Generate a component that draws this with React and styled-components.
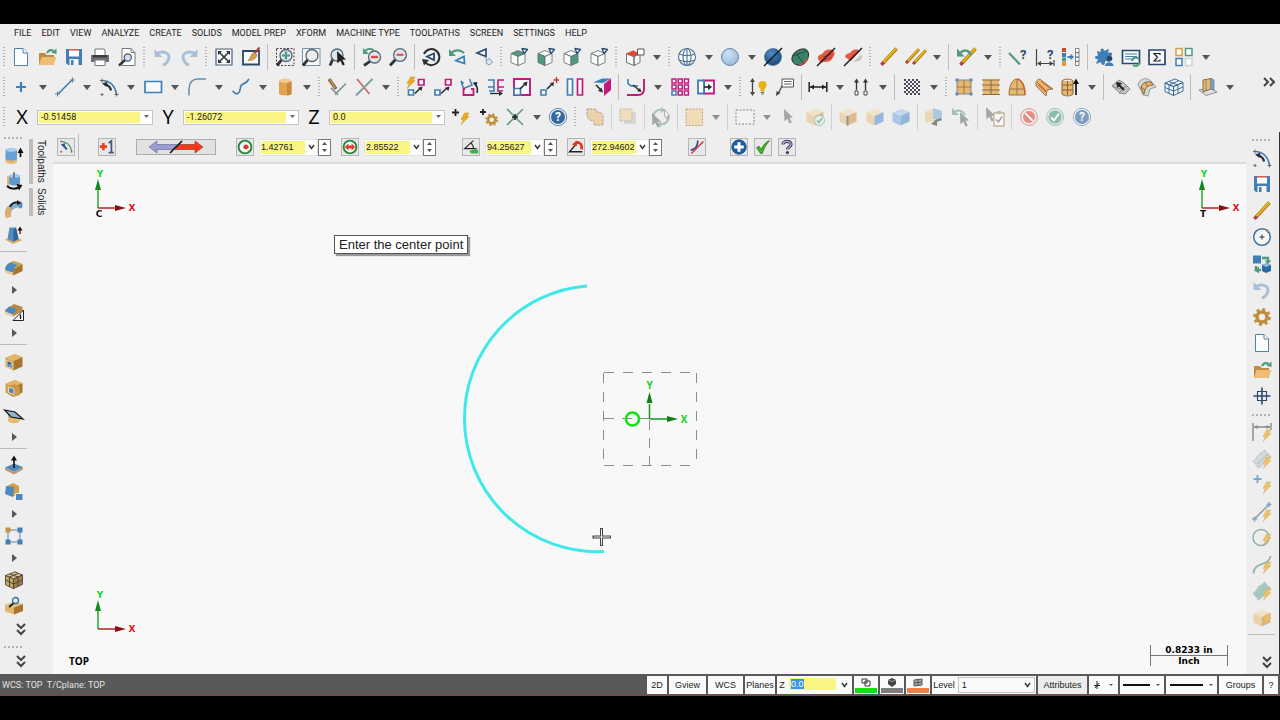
import { Fragment, useEffect, useRef } from "react";
import styled, { createGlobalStyle, css } from "styled-components";

const BLUE = "#3f7fb5";
const NAVY = "#27496f";
const TAN = "#e8b870";
const GREEN = "#4f9a80";
const PINK = "#c2197d";
const DARK = "#2b2f33";

function Bolt({ x = 0, y = 0, fill = "#f0a81c" }) {
  return (
    <path
      transform={`translate(${x} ${y})`}
      d="M4.5 0 9 0 6.6 3.6 9 3.6 1.2 11.5 3.4 6.4 1 6.4Z"
      fill={fill}
      stroke="#b8860b"
      strokeWidth="0.4"
    />
  );
}

function Cube({ top = "#f3dcb0", left = "#e8c285", right = "#cf9c50", line = "none" }) {
  return (
    <g stroke={line} strokeWidth="0.9" strokeLinejoin="round">
      <path d="M1.5 5.5 11 1.8 18.5 5 9.5 9Z" fill={top} />
      <path d="M1.5 5.5 9.5 9V18.6L1.5 14.8Z" fill={left} />
      <path d="M9.5 9 18.5 5V14.4L9.5 18.6Z" fill={right} />
    </g>
  );
}

function ViewCube({ top = "#f8f8f8", left = "#f8f8f8", right = "#f8f8f8" }) {
  return (
    <g stroke="#5b6b6b" strokeWidth="0.8" fill="none" strokeLinejoin="round">
      <path d="M2 6.5 9 3.5 16 6.5 9 9.5Z" fill={top} />
      <path d="M2 6.5 9 9.5V18.5L2 15.5Z" fill={left} />
      <path d="M9 9.5 16 6.5V15.5L9 18.5Z" fill={right} />
      <path d="M13 1.5 18.5 2.5 15 6.5Z" fill="#f8f8f8" stroke={NAVY} strokeWidth="1.3" />
    </g>
  );
}

function Lens({ x = 12, y = 8, r = 6, fill = "#dbe7f0" }) {
  return (
    <g>
      <path d={`M${x - r * 0.7} ${y + r * 0.7} 2 18.5`} stroke="#333" strokeWidth="2.8" />
      <circle cx={x} cy={y} r={r} fill={fill} stroke="#5d646b" strokeWidth="1.3" />
    </g>
  );
}

function Pencil({ shift = 0 }) {
  return (
    <g transform={`translate(${shift} 0)`}>
      <path d="M17.5 1.5 4 16" stroke="#a87a14" strokeWidth="3.6" />
      <path d="M17.2 1.5 4 15.6" stroke="#e8b51c" strokeWidth="2" />
      <path d="M4.7 15.3 2.4 17.8" stroke="#b03a3a" strokeWidth="3.4" />
    </g>
  );
}

function Sheet({ w = 13 }) {
  return (
    <g stroke="#4f81ad" fill="#fcfdfe">
      <path d={`M3.5 1.5H${w - 1}L${w + 3.5} 6V18.5H3.5Z`} />
      <path d={`M${w - 1} 1.5V6H${w + 3.5}`} />
    </g>
  );
}

const Cursor = ({ x = 0, y = 0, fill = "#222" }) => (
  <path
    transform={`translate(${x} ${y})`}
    d="M0 0 9 8.5 5.4 8.8 7.8 13.4 5.6 14.4 3.4 9.8 0.4 12.2Z"
    fill={fill}
  />
);

const openFolder = (
  <>
    <path d="M2 6H8L9.5 8H17V18H2Z" fill="#c08a45" />
    <path d="M4.5 10H19.5L16.5 18H2Z" fill="#efbd76" />
    <path d="M10 6C12 2.5 14.5 2.6 16.5 4.2" stroke={GREEN} strokeWidth="2.2" fill="none" />
    <path d="M14.5 5.8 19.5 7V1.5Z" fill={GREEN} />
  </>
);

const floppy = (
  <>
    <path d="M2 2H18V18H4L2 16Z" fill={BLUE} />
    <path d="M5 3H15V9.5H5Z" fill="#fff" />
    <path d="M5 2H15V3.6H5Z" fill="#d9604e" />
    <path d="M5.5 12H14.5V18H5.5Z" fill="#f5f5f5" />
    <path d="M7 13H9.5V18H7Z" fill={BLUE} />
  </>
);

const undo = (
  <>
    <path d="M4 6.5C10 3.5 17 5.5 15.8 11 15.2 14.5 12.8 17 10 18.2" stroke="#a9c1d8" strokeWidth="3" fill="none" />
    <path d="M1.5 2V10H9.5Z" fill="#a9c1d8" />
  </>
);

const arcTool = (
  <>
    <path d="M4 3.5C11 4 16 9 17.5 17" stroke={BLUE} strokeWidth="1.6" fill="none" />
    <path d="M12 13.5C11.5 10.5 9.5 8.5 7 7.5" stroke={DARK} strokeWidth="2.2" fill="none" />
    <path d="M3 6.5 8.5 4.8 7.5 10Z" fill={DARK} />
    <path d="M3 1.5V5.5M1 3.5H5M17.5 15.5V19.5M15.5 17.5H19.5M3 16V19M1.5 17.5H4.5" stroke="#666" />
  </>
);

const cylinder = (
  <>
    <path d="M4 4V16.5C4 19 16.5 19 16.5 16.5V4Z" fill="#dfa352" />
    <path d="M12 4H16.5V16.5C16.5 17.6 14.4 18.2 12 18.4Z" fill="#c88a3b" />
    <ellipse cx="10.2" cy="3.8" rx="6.2" ry="2.2" fill="#f1c98f" />
  </>
);

const gear = (fill = "#bf8d3d") => (
  <g fill="none" stroke={fill}>
    <circle cx="10" cy="10" r="5" strokeWidth="3.6" />
    <circle cx="10" cy="10" r="7.6" strokeWidth="2.6" strokeDasharray="3 2.97" />
  </g>
);

const sphere = (id, light, deep) => (
  <>
    <radialGradient id={id} cx="0.4" cy="0.3" r="0.8">
      <stop offset="0" stopColor={light} />
      <stop offset="1" stopColor={deep} />
    </radialGradient>
    <circle cx="10" cy="10" r="8.5" fill={`url(#${id})`} stroke="#4d7195" strokeWidth="0.8" />
  </>
);

const slash = <path d="M1 19 19 1" stroke="#1b1b1b" strokeWidth="1.5" />;

const surface = (fill) => (
  <>
    <path d="M1 12C5 11 5 5 9 4L13 1C14 5 18 5 19 8 14 9 13 16 6 19 5 15 2 15 1 12Z" fill={fill} stroke="#95a9b0" strokeWidth="0.8" />
    <path d="M5 15C10 13 10 8 16 6" stroke="#87a19c" fill="none" />
  </>
);

const minus = <path d="M8.5 7.8H15.5" stroke="#df4a3d" strokeWidth="2" />;

const backArrow = (
  <>
    <path d="M4 6C8 2 13 3 15 8" stroke={GREEN} strokeWidth="2.4" fill="none" />
    <path d="M1 1.5V9.5H8.5Z" fill={GREEN} />
  </>
);

const box3d = <Cube top="#e2b66a" left="#d6a04c" right="#a8752c" />;

const icons = {
  newFile: <Sheet />,
  open: openFolder,
  save: floppy,
  print: (
    <>
      <path d="M5 2H14L15 3V9H5Z" fill="#fff" stroke="#777" />
      <path d="M1 8H19V15H1Z" fill="#6d7176" />
      <path d="M3 8H17V10.5H3Z" fill="#3a3d41" />
      <path d="M5 13H15V18.5H5Z" fill="#fff" stroke="#777" />
    </>
  ),
  preview: (
    <>
      <path d="M5 1.5H14L18 5.5V18.5H5Z" fill="#fff" stroke="#777" />
      <path d="M14 1.5V5.5H18" fill="none" stroke="#777" />
      <path d="M8 13 2 18.5" stroke="#333" strokeWidth="2.4" />
      <circle cx="10.8" cy="10.5" r="3.6" fill="#cfe0ee" stroke="#456" strokeWidth="1.2" />
    </>
  ),
  undo,
  redo: <g transform="matrix(-1 0 0 1 20 0)">{undo}</g>,
  fit: (
    <>
      <path d="M2 2H18V18H2Z" fill="#f8f8f8" stroke="#49627c" strokeWidth="1.2" />
      <path d="M5.5 5.5 14.5 14.5M14.5 5.5 5.5 14.5" stroke={DARK} strokeWidth="1.5" />
      <path d="M4 4H8L4 8ZM16 4H12L16 8ZM4 16H8L4 12ZM16 16H12L16 12Z" fill={DARK} />
    </>
  ),
  repaint: (
    <>
      <path d="M2 4H18V17.5H2Z" fill="#fafafa" stroke={NAVY} strokeWidth="1.8" />
      <path d="M18.5 0.5 14 6" stroke="#b03a2e" strokeWidth="2" />
      <path d="M13 5 16 8C14.5 12.5 12 13.5 7 13.5 10 11 10 7 13 5Z" fill="#d5a052" stroke="#94682a" strokeWidth="0.6" />
    </>
  ),
  zoomWindow: (
    <>
      <path d="M1.5 1.5H19V18.5H1.5Z" fill="none" stroke="#444" strokeDasharray="2 1.5" />
      <Lens x={11} y={8.5} />
      <path d="M11 4.5V12.5M7 8.5H15" stroke={GREEN} strokeWidth="2.2" />
    </>
  ),
  zoomTarget: (
    <>
      <path d="M1.5 1.5H19V18.5H1.5Z" fill="#f5f7f9" stroke="#7891a8" />
      <Lens x={11} y={8.5} fill="#e9eff3" />
    </>
  ),
  zoomSelect: (
    <>
      <Lens x={9} y={8} />
      <Cursor x={9} y={4} />
    </>
  ),
  unzoomPrevious: (
    <>
      <Lens x={12.5} y={10} r={6} />
      <path d="M9 10H16" stroke="#df4a3d" strokeWidth="2.4" />
      <path d="M3 4C6 1 10 1 12 4" stroke={GREEN} strokeWidth="2" fill="none" />
      <path d="M1 1V7H7Z" fill={GREEN} />
    </>
  ),
  unzoom: (
    <>
      <Lens r={6.4} />
      {minus}
    </>
  ),
  rotateView: (
    <>
      <path d="M3 7A8 8 0 1 1 4 15" fill="none" stroke={DARK} strokeWidth="2" />
      <path d="M1 12 8 13 3 18.5Z" fill={DARK} />
      <path d="M6 9.5 13 6.5V13Z" fill="#f5f7fa" stroke={NAVY} strokeWidth="1.8" />
    </>
  ),
  previousView: (
    <>
      <path d="M3.5 5.5C8 2 13 3 16 6" stroke={GREEN} strokeWidth="2.2" fill="none" />
      <path d="M1 2V9H8Z" fill={GREEN} />
      <path d="M8 13.5 16 9.5 16.5 16.5Z" fill="#f5f7fa" stroke={BLUE} strokeWidth="1.8" />
    </>
  ),
  namedView: (
    <>
      <path d="M3 6 12 2V9.5Z" fill="#f5f7fa" stroke={NAVY} strokeWidth="1.7" />
      <path d="M10 9 13 14" stroke="#9aa" />
      <path d="M12 13.5 15.5 11.5 18.5 15 15.5 18 12.5 16.5Z" fill="#dbe7f2" stroke="#7899b8" />
    </>
  ),
  topView: <ViewCube top={GREEN} />,
  frontView: <ViewCube left={GREEN} />,
  rightView: <ViewCube right={GREEN} />,
  isoView: <ViewCube />,
  planeView: (
    <>
      <g stroke="#5b6b6b" strokeWidth="0.9" fill="#f8f8f8">
        <path d="M1.5 7 9 9.5V18.5L1.5 15.5ZM9 9.5 15 7V15.5L9 18.5Z" />
      </g>
      <path d="M1 6.5 8 3.5 15 6.5 9 10Z" fill="#dd4a33" />
      <path d="M12.5 2H19V8H12.5Z" fill="#fff" stroke="#555" />
    </>
  ),
  wireframe: (
    <g fill="#fafcfd" stroke="#4f7196" strokeWidth="1.1">
      <circle cx="10" cy="10" r="8.5" />
      <ellipse cx="10" cy="10" rx="4" ry="8.5" fill="none" />
      <path d="M10 1.5V18.5M2 7C7 9 13 9 18 7M2 13C7 15 13 15 18 13" fill="none" />
    </g>
  ),
  shaded: sphere("shadeLight", "#cfe2f5", "#93b5d8"),
  shadedHalf: (
    <>
      {sphere("shadeDeep", "#4f8dc4", "#14406f")}
      {slash}
    </>
  ),
  material: (
    <>
      <path d="M2 13C1 7 8 1 15 2 21 4 19 15 12 18 7 19 3 17 2 13Z" fill="#3c8268" stroke="#222" />
      <path d="M8 18C13 16 17 13 18.5 9 18 15 14 18.5 8 18Z" fill="#d8533b" />
      <path d="M5 5 14 17M2.5 9C9 7 13 5 17 4" stroke="#1d4f3d" fill="none" />
    </>
  ),
  materialOff: (
    <>
      <path d="M2 12C1 8 5 8 7 6 9 2 14 2 17 3 20 6 18 9 16 12 14 16 8 14 5 16Z" fill="#e35a40" />
      <path d="M7 10 17 7M8 13 16 10" stroke="#b6362a" fill="none" />
      {slash}
    </>
  ),
  translucent: (
    <>
      <path d="M2 10C3 6 6 7 8 5 10 2 14 2 17 4L8 14Z" fill="#e35a40" />
      <path d="M10 15 18 7.5 19.5 10 17 14Z" fill="#c3c7c9" />
      {slash}
    </>
  ),
  pencil: <Pencil />,
  pencils: (
    <>
      <g transform="translate(-1 1) scale(0.85)"><Pencil /></g>
      <g transform="translate(6 2) scale(0.85)"><Pencil /></g>
    </>
  ),
  undoPencil: (
    <>
      <Pencil shift={2} />
      {backArrow}
    </>
  ),
  analyzeEntity: (
    <>
      <path d="M1 6 12 17.5" stroke={GREEN} strokeWidth="2.2" />
      <text x="12" y="12" fontSize="13" fontWeight="700" fill={NAVY}>?</text>
    </>
  ),
  analyzeDistance: (
    <>
      <path d="M1.5 2V19M19 13V19M3 16.5H18" stroke="#444" strokeWidth="1.2" />
      <path d="M2 16.5 6 14V19ZM18.5 16.5 14.5 14V19Z" fill="#444" />
      <text x="12" y="12" fontSize="13" fontWeight="700" fill={NAVY}>?</text>
    </>
  ),
  changeRecognition: (
    <>
      <path d="M1 1H5V5H1Z" fill="#c4502d" />
      <path d="M1 6H5V10H1Z" fill="#377eb8" />
      <path d="M1 10.5H5V14.5H1Z" fill={GREEN} />
      <path d="M1 15H5V19H1Z" fill="#e69430" />
      <path d="M6.5 10H10.5" stroke={BLUE} strokeWidth="2" />
      <path d="M9.5 6.8 13 10 9.5 13.2Z" fill={BLUE} />
      <path d="M14.5 1.5H18V5.5H14.5ZM14.5 5.8H18V10H14.5ZM14.5 10.2H18V14.2H14.5ZM14.5 14.5H18V18.5H14.5Z" fill="#fff" stroke="#666" strokeWidth="0.8" />
    </>
  ),
  puzzle: (
    <>
      <path d="M3 4 7 5C5 1 10 0 10 4L15 2 14 6C19 4 20 9 15 9.5L16 15 11 14C12 19 7 19 7 15L2 17 4 12C0 13 0 8 4 9Z" fill={BLUE} />
      <circle cx="15.5" cy="11.5" r="2.8" fill={NAVY} />
      <path d="M11 19C11 14 19.5 14 19.5 19Z" fill={BLUE} />
    </>
  ),
  runAddin: (
    <>
      <path d="M1.5 3.5H18.5V16.5H1.5Z" fill="#fafafa" stroke={NAVY} strokeWidth="1.7" />
      <path d="M4 7H16M4 9.5H16M4 12H11" stroke={BLUE} strokeWidth="1.2" />
      <path d="M11 14A4 4 0 0 1 18 12M18.5 15A4 4 0 0 1 12 18" stroke={GREEN} strokeWidth="2" fill="none" />
    </>
  ),
  sigma: (
    <>
      <path d="M2 3H18V17.5H2Z" fill="#fafafa" stroke={NAVY} strokeWidth="1.7" />
      <path d="M13 8V6.5H7L10.5 10.3 7 14H13V12.5" fill="none" stroke="#222" strokeWidth="1.2" />
    </>
  ),
  windows: (
    <g fill="#fff" strokeWidth="1.5">
      <path d="M2 1.5H8V8.5H2Z" stroke="#e09a3e" />
      <path d="M11.5 1.5H18V8.5H11.5Z" stroke={GREEN} />
      <path d="M2 11.5H8V18.5H2Z" stroke={BLUE} />
      <path d="M11.5 11.5H18V18.5H11.5Z" stroke="#c8d6d0" />
    </g>
  ),
  point: <path d="M10 5V15M5 10H15" stroke={BLUE} strokeWidth="2.2" />,
  line: (
    <>
      <path d="M3 17 17 3" stroke={BLUE} strokeWidth="1.6" />
      <path d="M17.5 .5V5.5M15 3H20M2.5 14.5V19.5M0 17H5" stroke="#6a7f92" />
    </>
  ),
  arc: arcTool,
  rect: <path d="M2 4.5H18.5V15.5H2Z" fill="#f6f8fa" stroke={BLUE} strokeWidth="1.7" />,
  fillet: <path d="M2 18.5V12Q2.5 2 11 2H19" fill="none" stroke="#5b91b0" strokeWidth="1.5" />,
  spline: <path d="M1.5 14C7 20 9 15 9.5 10.5 10 5 14 9 18 2" fill="none" stroke={BLUE} strokeWidth="1.7" />,
  cylinder,
  trim: (
    <>
      <path d="M8 17.5 19 6.5M4 11 11 18" stroke="#789690" strokeWidth="1.7" />
      <path d="M2 2 9 12" stroke="#8b6b45" strokeWidth="3.4" />
      <path d="M3 2.5 8 11" stroke="#c99c55" strokeWidth="1.2" />
    </>
  ),
  breakAt: (
    <>
      <path d="M3 2 15.5 17" stroke="#d4605a" strokeWidth="1.7" />
      <path d="M18.5 2 2 18.5" stroke="#77a19b" strokeWidth="1.8" />
    </>
  ),
  dynamicXform: (
    <>
      <path d="M12.5 2.5H18V8H12.5Z" fill="#fff" stroke={PINK} strokeWidth="1.7" />
      <path d="M2.5 13H7.5V18H2.5Z" fill="#fff" stroke={BLUE} strokeWidth="1.7" />
      <path d="M9 16.5 14.5 11" stroke={DARK} strokeWidth="1.6" />
      <path d="M16.5 9.5 15.5 14 12 10.8Z" fill={DARK} />
      <Bolt x={0} y={0} />
    </>
  ),
  translate: (
    <>
      <path d="M12.5 2.5H18V8H12.5Z" fill="#fff" stroke={PINK} strokeWidth="1.7" />
      <path d="M2 13H7V18H2Z" fill="#fff" stroke={BLUE} strokeWidth="1.7" />
      <path d="M8 16.5 14 11" stroke={DARK} strokeWidth="1.6" />
      <path d="M16.5 9.5 15.5 14 12 10.8Z" fill={DARK} />
    </>
  ),
  rotate: (
    <>
      <path d="M2 4 4.5 11.5 13 8 10.5 2M4.5 6.5 2 4" fill="none" stroke={BLUE} strokeWidth="1.5" />
      <path d="M6 12H4.5V18H14.5V12H12" fill="none" stroke={PINK} strokeWidth="1.8" />
      <path d="M18 16C19 12 18 9 16 7" fill="none" stroke={DARK} strokeWidth="1.6" />
      <path d="M13.5 5.5 18.5 5 17 9.8Z" fill={DARK} />
    </>
  ),
  mirror: (
    <>
      <path d="M2 3H8V10H2M8 3V14H3" fill="none" stroke={BLUE} strokeWidth="1.6" />
      <path d="M18 3H12V10H18M12 3V14H17" fill="none" stroke={PINK} strokeWidth="1.6" />
      <path d="M4 16.5H14" stroke={DARK} strokeWidth="1.4" />
      <path d="M17 16.5 13 14V19Z" fill={DARK} />
    </>
  ),
  scale: (
    <>
      <path d="M2 2H18V18H2Z" fill="#fafafa" stroke={PINK} strokeWidth="1.9" />
      <path d="M2 11.5H8.5V18H2Z" fill="#fff" stroke={BLUE} strokeWidth="1.7" />
      <path d="M8 12 13 7" stroke={DARK} strokeWidth="1.7" />
      <path d="M15.5 4.5 14.5 9.5 10.8 6Z" fill={DARK} />
    </>
  ),
  moveOrigin: (
    <>
      <path d="M2 13H7V18H2Z" fill="#fff" stroke={BLUE} strokeWidth="1.6" />
      <path d="M8 12 13 7" stroke={DARK} strokeWidth="1.7" />
      <path d="M15 5 14.3 9.5 11 6.2Z" fill={DARK} />
      <path d="M17.5 0V6M14.5 3H20" stroke="#d22c33" strokeWidth="1.4" />
    </>
  ),
  offset: (
    <g fill="#fafafa" strokeWidth="1.7">
      <path d="M2.5 2H7.5V18H2.5Z" stroke={BLUE} />
      <path d="M12.5 2H17.5V18H12.5Z" stroke={PINK} />
    </g>
  ),
  project: (
    <>
      <path d="M1 5.5 10 1.5H19L11 6Z" fill={BLUE} />
      <path d="M12 7 19 1.5V13L12 19Z" fill={PINK} />
      <path d="M4 8 9 13" stroke={DARK} strokeWidth="1.7" />
      <path d="M11 15.5 6 14 9.5 10.5Z" fill={DARK} />
    </>
  ),
  offsetContour: (
    <>
      <path d="M2 2V6C3 9 5 9 12 9" fill="none" stroke={BLUE} strokeWidth="1.6" />
      <path d="M18 2V12Q18 18 12 18H1" fill="none" stroke={PINK} strokeWidth="1.9" />
      <path d="M7 8 13 13" stroke={DARK} strokeWidth="1.6" />
      <path d="M15.5 15 11 14.2 14 11Z" fill={DARK} />
    </>
  ),
  rectArray: (
    <g fill="#fff" strokeWidth="1.5">
      <path stroke={PINK} d="M2 2H6V6H2ZM8.2 2H12.2V6H8.2ZM14.4 2H18.4V6H14.4ZM2 8H6V12H2ZM8.2 8H12.2V12H8.2ZM14.4 8H18.4V12H14.4ZM8.2 14H12.2V18H8.2ZM14.4 14H18.4V18H14.4Z" />
      <path stroke={BLUE} d="M2 14H6V18H2Z" />
    </g>
  ),
  stretch: (
    <>
      <path d="M8 3.5H18V16.5H8Z" fill="#fff" stroke={PINK} strokeWidth="1.8" />
      <path d="M2 3.5H8V16.5H2Z" fill="#fff" stroke={BLUE} strokeWidth="1.8" />
      <path d="M8 10H13" stroke={DARK} strokeWidth="1.7" />
      <path d="M16 10 12 6.8V13.2Z" fill={DARK} />
    </>
  ),
  hint: (
    <>
      <path d="M3.5 4V16" stroke="#444" strokeWidth="1.3" />
      <path d="M3.5 1 6 5H1ZM3.5 19 6 15H1Z" fill="#444" />
      <circle cx="13.5" cy="8" r="4" fill="#e7b50e" />
      <path d="M11.5 11H15.5V14.5H11.5Z" fill="#e7b50e" />
      <path d="M11.8 15.5H15.2M12.2 17H14.8" stroke="#666" />
    </>
  ),
  note: (
    <>
      <path d="M7 2H18.5V10H7Z" fill="#fff" stroke="#555" />
      <path d="M9 4.5H16.5M9 7H16.5" stroke="#666" />
      <path d="M7 9 3 17" stroke="#444" strokeWidth="1.3" />
      <path d="M1 19 1.6 14 5.5 16Z" fill="#444" />
    </>
  ),
  dimension: (
    <>
      <path d="M1.2 5V15M18.8 5V15M2 10H18" stroke="#222" strokeWidth="1.5" />
      <path d="M2 10 6 7.5V12.5ZM18 10 14 7.5V12.5Z" fill="#222" />
    </>
  ),
  ordinate: (
    <>
      <path d="M5.5 5V13M14.5 5V13" stroke="#333" strokeWidth="1.3" />
      <path d="M5.5 1.5 8 5.5H3ZM14.5 1.5 17 5.5H12Z" fill="#333" />
      <path d="M4 14H7V18H4ZM13 14H16V18H13Z" fill="#fff" stroke="#444" />
    </>
  ),
  hatch: (
    <>
      <pattern id="checks" width="4" height="4" patternUnits="userSpaceOnUse">
        <path d="M0 0H2V2H0ZM2 2H4V4H2Z" fill="#474d55" />
      </pattern>
      <path d="M2 2H18V18H2Z" fill="url(#checks)" />
    </>
  ),
  planeSurface: (
    <>
      <path d="M3 3H17V17H3Z" fill={TAN} stroke="#7c8794" />
      <path d="M10 3V17M3 10H17" stroke="#9c7a4c" />
      <path d="M1.5 1.5H4.5V4.5H1.5ZM15.5 1.5H18.5V4.5H15.5ZM1.5 15.5H4.5V18.5H1.5ZM15.5 15.5H18.5V18.5H15.5Z" fill="#6389b0" />
    </>
  ),
  ruledSurface: (
    <>
      <path d="M2 2.5H18V17.5H2Z" fill={TAN} />
      <path d="M1 3H19M1 8H19M1 13H19M1 17.5H19M10 3V17" stroke="#806a4b" />
    </>
  ),
  loftSurface: (
    <>
      <path d="M2 18C2 10 5 2 10 2 15 2 18 10 18 18Z" fill={TAN} stroke="#947246" />
      <path d="M2 12H18M10 2V18" stroke="#94744a" />
      <path d="M11 2C16 4 18 10 18 18" stroke="#d05b2c" fill="none" strokeWidth="1.4" />
    </>
  ),
  sweptSurface: (
    <>
      <path d="M2 6C2 2 7 1 8 4L19 12 13 13 12 19 2 9Z" fill={TAN} stroke="#81613a" strokeWidth="0.8" />
      <path d="M4 8 13 16M7 4 17 12M3 5 12 14" stroke="#c4582c" fill="none" />
    </>
  ),
  extrudeSurface: (
    <>
      <path d="M2 4H13V18H2Z" fill={TAN} />
      <path d="M2 4C4 1.5 11 1.5 13 4V17C11 19.5 4 19.5 2 17ZM2 8H13M2 13H13M7.5 4V18" fill="none" stroke="#8a6134" />
      <path d="M16 18V6" stroke="#111" strokeWidth="1.7" />
      <path d="M16 1.5 19 7H13Z" fill="#111" />
    </>
  ),
  trimSurface: (
    <>
      <path d="M1 9 8 3 13 6 19 12 14 17 9 16Z" fill="#c0c5c0" stroke="#848a86" />
      <path d="M2 10 10 12 16 9M8 17 13 10" stroke="#8d948f" fill="none" />
      <path d="M13 13 8 8" stroke="#222" strokeWidth="2" />
      <path d="M5 5 11 6 6.5 11Z" fill="#222" />
    </>
  ),
  filletSurface: (
    <>
      <path d="M1 8C2 1 10 0 14 4L19 10 13 12 11 19 6 18 4 13Z" fill="#d3d7d4" stroke="#989e9a" />
      <path d="M4 12C4 7 8 4 14 5L16 8C10 8 8 11 7 17Z" fill={TAN} stroke="#87673b" />
      <path d="M8 5 11 10M4 10 8 13" stroke="#87673b" />
    </>
  ),
  meshCube: (
    <g fill="#eef4fa" stroke="#31618f" strokeWidth="0.9">
      <path d="M1 6 11 2 19 5.5 9.5 9.5Z M1 6 9.5 9.5V18.5L1 14.5ZM9.5 9.5 19 5.5V14L9.5 18.5Z" />
      <path d="M5 4.5 14 8V16.5M15 3.6 5 8V16.5M1 10.5 9.5 14 19 10" fill="none" />
    </g>
  ),
  solidPlane: (
    <>
      <path d="M1 13 12 11 19 15 8 18.5Z" fill="#dfe2e3" stroke="#858c91" />
      <path d="M5 3 13 1.5V12L5 15Z" fill={TAN} stroke="#8a6a3c" />
      <path d="M13 1.5 16 3V13L13 12ZM8 3V14" fill="#7fa5c6" stroke="#5b7d99" strokeWidth="0.8" />
    </>
  ),
  fastPoint: (
    <>
      <path d="M3.5 2V9M0 5.5H7" stroke="#222" strokeWidth="1.8" />
      <Bolt x={8} y={6} />
    </>
  ),
  pointSettings: (
    <>
      <path d="M4 2V8M1 5H7" stroke="#222" strokeWidth="1.8" />
      <g transform="translate(5.5 5.5) scale(0.72)">{gear()}</g>
    </>
  ),
  autocursor: (
    <>
      <path d="M2 2 18 18M18 2 2 18" stroke="#6b9b8a" strokeWidth="1.7" />
      <path d="M10 7V13M7 10H13" stroke="#222" strokeWidth="1.6" />
    </>
  ),
  help: (
    <>
      <circle cx="10" cy="10" r="8.6" fill="#f5f8fb" stroke="#5d87b5" />
      <circle cx="10" cy="10" r="7" fill="#34689f" />
      <text x="10" y="14.2" fontSize="12" fontWeight="700" fill="#fff" textAnchor="middle">?</text>
    </>
  ),
  selectChain: (
    <path d="M2 2H11V5C16 4 19 8 18 12V18H9V14C4 14 2 11 2 7Z" fill="#eac07e" stroke="#7d6c4d" strokeDasharray="2 1" />
  ),
  selectBehind: (
    <>
      <path d="M6 5H18V17H6Z" fill="#c6c9cb" />
      <path d="M2 2H14V14H2Z" fill="#f0d29c" stroke="#998" strokeDasharray="2 1" />
    </>
  ),
  selectCycle: (
    <>
      <path d="M3 12C1 7 5 2 11 3M17 8C19 13 15 18 9 17" stroke="#7aa89a" strokeWidth="2" fill="none" />
      <path d="M10 0V6L14 3ZM10 14V20L6 17Z" fill="#7aa89a" />
      <Cursor x={1} y={6} fill="#70767c" />
      <path d="M13 2 19 9 16 9 17 13 14 10Z" fill="#fff" stroke="#777" />
    </>
  ),
  selectAll: <path d="M2 2H18.5V18.5H2Z" fill="#f5cf94" stroke="#a07b43" strokeDasharray="2 1.2" />,
  selectWindow: <path d="M1 3H19V17H1Z" fill="#f6f6f6" stroke="#444" strokeDasharray="2 1.5" />,
  pointer: <Cursor x={5} y={2} fill="#6e747a" />,
  solidCheck: (
    <>
      <Cube />
      <circle cx="14.5" cy="13.5" r="5" fill="#e3eeea" stroke="#7aa896" />
      <path d="M12 13.5 14 15.5 17 11" stroke={GREEN} strokeWidth="1.6" fill="none" />
    </>
  ),
  solidEdge: (
    <>
      <Cube />
      <path d="M9.5 9V18.6" stroke="#555" strokeWidth="2" />
    </>
  ),
  solidFace: <Cube right="#5993cf" />,
  solidBody: <Cube top="#a9cbee" left="#7eb0e2" right="#5790cb" />,
  solidBack: (
    <>
      <path d="M1 5 9 2V14L1 16Z" fill="#e9c88e" />
      <path d="M9 1 18 4V14L9 12Z" fill="#7fb0df" />
      <path d="M17 12 10 15" stroke="#444" strokeWidth="2" />
      <path d="M7 17 13 12 13 19Z" fill="#444" />
    </>
  ),
  lastSelect: (
    <>
      <path d="M3 5C8 2 12 4 14 8" stroke="#6aa691" strokeWidth="2" fill="none" />
      <path d="M1 1V8H8Z" fill="#6aa691" />
      <Cursor x={9} y={5} fill="#6e747a" />
    </>
  ),
  validate: (
    <>
      <Cursor x={1} y={0} fill="#70767c" />
      <path d="M9 6H19V19H9Z" fill="#fff" stroke="#b08d50" strokeWidth="1.4" />
      <path d="M12 4H16V7H12Z" fill="#999" />
      <path d="M11 12.5 13.5 15 17 9.5" stroke="#667" strokeWidth="1.4" fill="none" />
    </>
  ),
  clear: (
    <>
      <circle cx="10" cy="10" r="8.4" fill="#f6e6e4" stroke="#d9604e" />
      <circle cx="10" cy="10" r="6" fill="#d9503e" />
      <path d="M6 6 14 14" stroke="#fff" strokeWidth="1.8" />
    </>
  ),
  accept: (
    <>
      <circle cx="10" cy="10" r="8.4" fill="#e7f1ed" stroke="#62a38a" />
      <circle cx="10" cy="10" r="6.6" fill="#52997d" />
      <path d="M6 10.5 9 13.5 14 6.5" stroke="#fff" strokeWidth="2" fill="none" />
    </>
  ),
  arcPanel: (
    <>
      <path d="M4 3C11 3 16 8 17 15" stroke="#38925a" strokeWidth="1.3" fill="none" />
      <path d="M11 13 7 8" stroke="#29558f" strokeWidth="2.4" />
      <path d="M3.5 7 9 5 8 11Z" fill="#29558f" />
      <circle cx="4" cy="3" r="1.2" fill="#d44" />
      <circle cx="17" cy="16" r="1.2" fill="#d44" />
      <circle cx="4" cy="16" r="1.2" fill="#d44" />
    </>
  ),
  plusOne: (
    <>
      <path d="M5.5 5V14M1 9.5H10" stroke="#e8401c" strokeWidth="3.2" />
      <path d="M12 5 15.5 2.5V17M12 17H18.5" stroke="#4a557e" strokeWidth="2.2" fill="none" />
    </>
  ),
  radius: (
    <>
      <circle cx="10" cy="10" r="8" fill="#f8fcf8" stroke="#248a3a" strokeWidth="2.4" />
      <path d="M10 10H15" stroke="#c22" strokeWidth="1.5" />
      <circle cx="11" cy="10" r="3" fill="#d8343a" />
    </>
  ),
  diameter: (
    <>
      <circle cx="10" cy="10" r="8" fill="#f8fcf8" stroke="#248a3a" strokeWidth="2.4" />
      <path d="M3.5 10 8 5.5V8.2H12V5.5L16.5 10 12 14.5V11.8H8V14.5Z" fill="#e0392e" />
    </>
  ),
  startAngle: (
    <>
      <path d="M13 2 2 12H17M9 5C12 6 13 9 13 12" stroke="#222" strokeWidth="1.4" fill="none" />
      <path d="M8 15 13 13H19V18H10Z" fill="#3db24c" />
    </>
  ),
  endAngle: (
    <>
      <path d="M13 3 2 16H18" stroke="#222" strokeWidth="1.8" fill="none" />
      <path d="M9 5C15 3 18 7 17 13" stroke="#e0351e" strokeWidth="3.2" fill="none" />
      <path d="M5 7 11 2 11 9Z" fill="#e0351e" />
    </>
  ),
  tangent: (
    <>
      <path d="M2 14C8 13 11 8 11 2" stroke="#234a9a" strokeWidth="2" fill="none" />
      <path d="M3 18 18 3" stroke="#d33a2c" strokeWidth="1.8" />
    </>
  ),
  apply: (
    <>
      <circle cx="10" cy="10" r="9" fill="#1761a8" stroke="#0f4377" />
      <path d="M10 4V16M4 10H16" stroke="#fff" strokeWidth="3.8" />
    </>
  ),
  ok: <path d="M2 11 5 9 8 13C10 8 13 4 18 2 14 7 11 12 9 18H7Z" fill="#45b528" stroke="#23720f" />,
  question: (
    <>
      <path d="M5 7C5 2 15 1.5 15 7 15 10 10.5 10 10.5 13" stroke="#3d3a63" strokeWidth="4" fill="none" />
      <path d="M5 7C5 2 15 1.5 15 7 15 10 10.5 10 10.5 13" stroke="#b4b2d0" strokeWidth="1.6" fill="none" />
      <circle cx="10.5" cy="17" r="2" fill="#3d3a63" />
    </>
  ),
  extrude: (
    <>
      <path d="M1.5 9H13V16C11 18.5 3.5 18.5 1.5 16Z" fill={TAN} />
      <path d="M1.5 4V13C4 15 11 15 13 13V4Z" fill="#67a0d6" />
      <ellipse cx="7.3" cy="3.8" rx="5.8" ry="2" fill="#a8cbec" />
      <path d="M16.5 11V5" stroke="#111" strokeWidth="1.8" />
      <path d="M16.5 1.5 19.5 7H13.5Z" fill="#111" />
    </>
  ),
  revolve: (
    <>
      <path d="M3 4V15H5V4Z" fill={TAN} />
      <path d="M5 3.5V12C8 14 14 14 16 12V3.5Z" fill="#6199cc" />
      <ellipse cx="10.5" cy="3.8" rx="5.8" ry="2" fill="#a8cbec" />
      <path d="M10 0V6" stroke="#333" />
      <path d="M3 14C7 18 11 17 15 15.5" stroke="#111" strokeWidth="2" fill="none" />
      <path d="M12.5 12 18.5 13 15 18.5Z" fill="#111" />
    </>
  ),
  sweep: (
    <>
      <path d="M4 17C3 10 8 5 16 5.5" stroke="#82aed4" strokeWidth="6" fill="none" />
      <path d="M4.5 18.5C3 14 4 11 6.5 9" stroke="#dfae6c" strokeWidth="5.4" fill="none" />
      <path d="M6 8C8 4 11 3 14 3.5" stroke="#111" strokeWidth="1.5" fill="none" />
      <ellipse cx="16.5" cy="6" rx="2" ry="3.4" fill="#5b8fc0" />
      <path d="M13 1 17 4 13 6Z" fill="#111" />
    </>
  ),
  loft: (
    <>
      <path d="M1 14.5 9 11.5 18.5 15 9 19Z" fill="#d8a867" />
      <path d="M5.5 2.5 12 2.5 14.5 14 9.5 16.5 3.5 14Z" fill="#518bc2" />
      <path d="M9.5 5 12 2.5 14.5 14 9.5 16.5Z" fill="#2f679d" />
      <path d="M16 9V4" stroke="#812" strokeWidth="1.5" />
      <path d="M16 1.5 18.5 5.5H13.5Z" fill="#111" />
    </>
  ),
  solidFillet: (
    <>
      <path d="M1 11C2 6 6 3.5 10 3L18.5 6V13L9 17.5 1 14.5Z" fill="#e6cf9f" />
      <path d="M9.5 11 18.5 6V13L9 17.5Z" fill="#a8752c" />
      <path d="M6 4.5 10 3 18.5 6 13 8.5Z" fill="#d0a050" />
      <path d="M1 12C1.5 7.5 4 5 7 4.5L14 7.5C11 8.5 9.5 11 9 14.5Z" fill="#4b88bd" />
    </>
  ),
  solidChamfer: (
    <>
      <path d="M1 9 10 3 18.5 6V10L9 15.5 1 12.5Z" fill="#b98a3e" />
      <path d="M1 10 9 13V15.5L1 12.5Z" fill="#e6cf9f" />
      <path d="M1 10 5 5.5 13 8.5 9 13.5Z" fill="#4b88bd" />
      <path d="M19.5 9V19.5H9Z" fill="#f5f5f5" stroke="#222" />
      <path d="M16.5 13.5V18" stroke="#111" strokeWidth="1.3" />
    </>
  ),
  shell: (
    <>
      {box3d}
      <path d="M3 8.5 8 10.5V16.5L3 14.5Z" fill="#2d6292" stroke="#ecd9b0" />
      <path d="M4.5 12.5 7.5 11.5V15.5L4.5 14.5Z" fill="#6fa4d0" />
    </>
  ),
  boolean: (
    <>
      {box3d}
      <path d="M4 8 11 6 16 9V17L9 19 4 16Z" fill="#cb9747" />
      <path d="M4.5 9 10 11V16.5L4.5 14.5Z" fill="#4b88bd" stroke="#ecd9b0" />
    </>
  ),
  trimSolid: (
    <>
      <path d="M4 9V16C6 19 14 19 16 16V11Z" fill={TAN} />
      <path d="M0.5 5 11 7 19 14 7 12Z" fill="#8fb5d5" stroke="#111" strokeWidth="1.2" />
    </>
  ),
  thicken: (
    <>
      <path d="M1 12.5 10 8.5 19 12 10 17Z" fill="#4b88bd" />
      <path d="M1 12.5 10 17V19.5L1 15ZM19 12 10 17V19.5L19 14.5Z" fill="#bb9a67" />
      <path d="M10 13V5" stroke="#111" strokeWidth="1.6" />
      <path d="M10 0.5 13 5.5H7Z" fill="#111" />
    </>
  ),
  modifySolid: (
    <>
      <path d="M3 4 9 1 15 4V12L8 15Z" fill="#d49d49" />
      <path d="M2 4 10 5 9 15 1 12Z" fill="#4b88bd" />
      <path d="M11.5 11.5H19V18.5H11.5Z" fill="#4b88bd" stroke="#f2f2f2" />
    </>
  ),
  pattern: (
    <>
      <path d="M4 4H16V16H4Z" fill="none" stroke="#5e86aa" />
      <path d="M1.5 1.5H6.5V6.5H1.5Z" fill="#c99243" />
      <path d="M13.5 1.5H18.5V6.5H13.5ZM1.5 13.5H6.5V18.5H1.5ZM13.5 13.5H18.5V18.5H13.5Z" fill={BLUE} />
    </>
  ),
  solidLayout: (
    <>
      <Cube top="#dcc28d" left="#c8a665" right="#9f7f48" line="#4d4638" />
      <path d="M5.5 7V17M14 7V16.5M1.5 10 9.5 14 18.5 10M6 4 14 7M14 3.5 5.5 7" stroke="#4d4638" fill="none" />
    </>
  ),
  findFeature: (
    <>
      <path d="M1 8.5 11 5.5 19 8 10 11.5Z" fill="#e6c180" />
      <path d="M1 8.5 10 11.5V18.5L1 15.5Z" fill="#e0b970" />
      <path d="M10 11.5 19 8V15L10 18.5Z" fill="#a8752c" />
      <path d="M5 11 10 7" stroke="#222" strokeWidth="2" />
      <circle cx="11.5" cy="4.5" r="3" fill="#dfeaf3" stroke="#3c6a94" strokeWidth="1.3" />
    </>
  ),
  circle: (
    <>
      <circle cx="10" cy="10" r="8.3" fill="#f5f7f9" stroke="#3f7099" strokeWidth="1.5" />
      <path d="M10 7.5V12.5M7.5 10H12.5" stroke="#333" />
      <path d="M15.5 2V6M13.5 4H17.5" stroke="#c0865a" />
    </>
  ),
  swap: (
    <>
      <path d="M1 1.5H9V9.5H1Z" fill={BLUE} />
      <path d="M10 11 15 9 19 11V17L14 19 10 17Z" fill="#2c6aa3" />
      <path d="M10 11 15 9 19 11 14 13Z" fill="#8fb9dc" />
      <path d="M10 4H16V8M9 16H4V12" stroke={GREEN} strokeWidth="2.4" fill="none" />
      <path d="M12.5 6.5H19.5L16 10ZM7 12.5V19.5L2 16Z" fill={GREEN} />
    </>
  ),
  gear: gear(),
  target: (
    <>
      <path d="M10 1.5V18.5M1.5 10H18.5" stroke={NAVY} strokeWidth="1.6" />
      <path d="M5.5 5.5H14.5V14.5H5.5Z" fill="none" stroke={NAVY} strokeWidth="1.1" />
    </>
  ),
  fastDimension: (
    <>
      <path d="M1 1V19M19 1V8M2 5H18" stroke="#555" strokeWidth="1.4" />
      <path d="M2 5 5.5 3V7ZM18 5 14.5 3V7Z" fill="#555" />
      <Bolt x={10} y={8} />
    </>
  ),
  fastSurface: (
    <>
      {surface("#c4ced4")}
      <Bolt x={10} y={8} />
    </>
  ),
  fastAdd: (
    <>
      <path d="M5.5 0V8M1.5 4H9.5" stroke="#4a7fc0" strokeWidth="2" />
      <Bolt x={10} y={7} />
    </>
  ),
  fastLine: (
    <>
      <path d="M2.5 17 17 2.5" stroke="#5d7890" strokeWidth="1.7" />
      <path d="M17 0V5M14.5 2.5H19.5M2.5 14.5V19.5M0 17H5" stroke="#4a7fc0" strokeWidth="1.6" />
      <Bolt x={10} y={8} />
    </>
  ),
  fastCircle: (
    <>
      <circle cx="9" cy="9.5" r="8" fill="none" stroke="#5d8f8a" strokeWidth="1.5" />
      <Bolt x={10} y={6} />
    </>
  ),
  fastCurve: (
    <>
      <path d="M1.5 18.5C2 6 17 12 18.5 1" fill="none" stroke="#5d8f8a" strokeWidth="1.8" />
      <Bolt x={10} y={7} />
    </>
  ),
  fastSheet: (
    <>
      {surface("#7ab8a8")}
      <Bolt x={10} y={8} />
    </>
  ),
  fastSolid: (
    <>
      <Cube />
      <Bolt x={10} y={6} />
    </>
  ),
};

function Icon({ name, size = 20 }) {
  return (
    <svg width={size} height={size} viewBox="0 0 20 20" aria-hidden="true">
      {icons[name]}
    </svg>
  );
}

// "v" is a drop-down caret, "|" a divider inside one toolbar
const viewBars = [
  ["newFile", "open", "save", "print", "preview"],
  ["undo", "redo"],
  ["fit", "repaint", "|", "zoomWindow", "zoomTarget", "zoomSelect", "|", "unzoomPrevious", "unzoom", "|", "rotateView", "previousView", "namedView"],
  ["topView", "frontView", "rightView", "isoView"],
  ["planeView", "v"],
  ["wireframe", "v", "shaded", "v", "shadedHalf", "material", "materialOff", "translucent"],
  ["pencil", "pencils", "v", "|", "undoPencil", "v"],
  ["analyzeEntity", "analyzeDistance", "changeRecognition", "|", "puzzle", "runAddin", "sigma", "windows", "v"],
];

const createBars = [
  ["point", "v", "line", "v", "arc", "v", "rect", "v", "fillet", "v", "spline", "v", "cylinder", "v"],
  ["trim", "breakAt", "v"],
  ["dynamicXform", "translate", "rotate", "mirror", "scale", "moveOrigin", "offset", "project", "|", "offsetContour", "v", "rectArray", "stretch", "v"],
  ["hint", "note", "|", "dimension", "v", "ordinate", "v", "|", "hatch", "v"],
  ["planeSurface", "ruledSurface", "loftSurface", "sweptSurface", "extrudeSurface", "v", "|", "trimSurface", "filletSurface", "meshCube", "|", "solidPlane", "v"],
];

const selectTools = [
  "selectChain", "|", "selectBehind", "|", "selectCycle", "|", "selectAll", "v", "|", "selectWindow", "v", "pointer", "solidCheck", "|",
  "solidEdge", "solidFace", "solidBody", "|", "solidBack", "lastSelect", "|", "validate", "|", "clear", "accept", "help",
];

const solidsDock = [
  "extrude", "revolve", "sweep", "loft", "|", "solidFillet", "v", "solidChamfer", "v", "|",
  "shell", "boolean", "trimSolid", "v", "|", "thicken", "modifySolid", "v", "pattern", "v", "solidLayout", "findFeature",
];

const quickDock = ["arc", "save", "pencil", "circle", "swap", "undo", "gear", "newFile", "open", "target"];
const fastDock = ["fastDimension", "fastSurface", "fastAdd", "fastLine", "fastCircle", "fastCurve", "fastSheet", "fastSolid"];

const menus = ["FILE", "EDIT", "VIEW", "ANALYZE", "CREATE", "SOLIDS", "MODEL PREP", "XFORM", "MACHINE TYPE", "TOOLPATHS", "SCREEN", "SETTINGS", "HELP"];

function Tools({ items, vertical }) {
  return items.map((item, i) => {
    if (item === "|") return <Separator key={i} $vertical={vertical} />;
    if (item === "v")
      return (
        <Caret key={i} type="button" aria-label="More" $vertical={vertical}>
          <svg width="8" height="8" viewBox="0 0 8 8" aria-hidden="true">
            <path d={vertical ? "M2 0 7 4 2 8Z" : "M0 2H8L4 7Z"} fill="#555" />
          </svg>
        </Caret>
      );
    return (
      <Tool key={i} type="button" aria-label={item} $vertical={vertical}>
        <Icon name={item} />
      </Tool>
    );
  });
}

function Toolbar({ bars }) {
  return bars.map((bar, i) => (
    <Fragment key={i}>
      <Grip />
      <Tools items={bar} />
    </Fragment>
  ));
}

function Combo({ label, value, wide }) {
  return (
    <ComboBox $wide={wide}>
      <ComboInput aria-label={label} defaultValue={value} $wide={wide} />
      <ComboButton type="button" aria-label={`${label} list`}>
        {wide ? (
          <svg width="5" height="4" viewBox="0 0 5 4" aria-hidden="true">
            <path d="M0 0H5L2.5 3Z" fill="#666" />
          </svg>
        ) : (
          <Chevron />
        )}
      </ComboButton>
    </ComboBox>
  );
}

function Chevron() {
  return (
    <svg width="7" height="6" viewBox="0 0 7 6" aria-hidden="true">
      <path d="M1 1 3.5 4.5 6 1" fill="none" stroke="#333" strokeWidth="1.4" />
    </svg>
  );
}

function Measure({ icon, label, value }) {
  return (
    <Field>
      <PanelButton type="button" aria-label={label}>
        <Icon name={icon} size={16} />
      </PanelButton>
      <Combo label={label} value={value} />
      <Spinner>
        <button type="button" aria-label={`Increase ${label}`}>
          <svg width="5" height="3" viewBox="0 0 5 3" aria-hidden="true">
            <path d="M0 3H5L2.5 0Z" fill="#555" />
          </svg>
        </button>
        <button type="button" aria-label={`Decrease ${label}`}>
          <svg width="5" height="3" viewBox="0 0 5 3" aria-hidden="true">
            <path d="M0 0H5L2.5 3Z" fill="#555" />
          </svg>
        </button>
      </Spinner>
    </Field>
  );
}

function More({ down }) {
  return (
    <svg width="14" height="14" viewBox="0 0 14 14" aria-hidden="true">
      <path
        d={down ? "M3 1 7 5 11 1M3 7 7 11 11 7" : "M2 3 6 7 2 11M8 3 12 7 8 11"}
        fill="none"
        stroke="#444"
        strokeWidth="2"
      />
    </svg>
  );
}

function Axes({ corner, origin }) {
  return (
    <Gnomon $corner={corner} width="50" height="54" viewBox="0 0 50 54" aria-hidden="true">
      <path d="M9 41V20" stroke="#17a321" strokeWidth="1.4" />
      <path d="M9 12 12 23H6Z" fill="#138a1c" />
      <path d="M9 41H28" stroke="#b3141c" strokeWidth="1.4" />
      <path d="M37 41 26 38V44Z" fill="#8d1016" />
      <text x="11" y="10" textAnchor="middle" fill="#14d61e">Y</text>
      <text x="43" y="44" textAnchor="middle" fill="#e0141c">X</text>
      {origin && <text x="10" y="50" textAnchor="middle" fill="#111">{origin}</text>}
    </Gnomon>
  );
}

function Drawing() {
  return (
    <Sketch viewBox="0 0 1193 510" preserveAspectRatio="xMinYMin slice" aria-hidden="true">
      <path d="M534 122A133 133 0 0 0 411.5 255A133 133 0 0 0 551 387.5" fill="none" stroke="#3fe9ea" strokeWidth="3" />
      <g fill="none" stroke="#8d8d8d" shapeRendering="crispEdges">
        <path d="M550.5 208.5H643.5M550.5 301.5H643.5M550.5 208.5V301.5M643.5 208.5V301.5" strokeDasharray="10 9" />
        <path d="M551 254.5H596M596.5 256V301" strokeDasharray="10 8" />
      </g>
      <circle cx="579.5" cy="255" r="6.5" fill="none" stroke="#16e016" strokeWidth="2.6" />
      <path d="M596.5 255V240M597 255H615" stroke="#119c1b" strokeWidth="1.5" />
      <path d="M596.5 228 599.5 239H593.5ZM625 255 614 252V258Z" fill="#0f7d18" />
      <text x="596.5" y="225" textAnchor="middle">Y</text>
      <text x="631" y="259" textAnchor="middle">X</text>
      <path d="M548.5 364V382M539.5 373H558" stroke="#444" strokeWidth="3" />
      <path d="M548.5 365V381M541 373H557" stroke="#eee" />
    </Sketch>
  );
}

function StatusBar() {
  const depth = useRef(null);

  useEffect(() => {
    depth.current.focus();
    depth.current.select();
  }, []);

  return (
    <Status>
      <StatusText>WCS: TOP&nbsp; T/Cplane: TOP</StatusText>
      <Cell type="button" $w={20}>2D</Cell>
      <Cell type="button" $w={37}>Gview</Cell>
      <Cell type="button" $w={35}>WCS</Cell>
      <Cell type="button" $w={30}>Planes</Cell>
      <DepthField>
        <label htmlFor="depth">Z</label>
        <input id="depth" ref={depth} defaultValue="0.0" />
        <button type="button" aria-label="Depth list">
          <Chevron />
        </button>
      </DepthField>
      <Swatch type="button" aria-label="Wireframe color" $color="#12e012">
        <svg width="10" height="9" viewBox="0 0 10 9" aria-hidden="true">
          <path d="M1 1H6V5H1ZM4 3H9V8H4Z" fill="#fff" stroke="#333" />
        </svg>
      </Swatch>
      <Swatch type="button" aria-label="Solid color" $color="#7d7d7d">
        <svg width="10" height="9" viewBox="0 0 10 9" aria-hidden="true">
          <path d="M1 2 5 0 9 2V6L5 9 1 6Z" fill="#444" />
          <path d="M1 2 5 3.5 9 2" stroke="#999" fill="none" />
        </svg>
      </Swatch>
      <Swatch type="button" aria-label="Surface color" $color="#f2804a">
        <svg width="10" height="9" viewBox="0 0 10 9" aria-hidden="true">
          <path d="M1 2 9 1V7L1 8ZM5 1.5V7.5M1 5 9 4" fill="#aaa" stroke="#555" />
        </svg>
      </Swatch>
      <LevelField>
        <label htmlFor="level">Level</label>
        <SelectWrap>
          <select id="level" defaultValue="1">
            <option>1</option>
          </select>
          <Chevron />
        </SelectWrap>
      </LevelField>
      <Cell type="button" $w={49} $shade>Attributes</Cell>
      <Cell type="button" $w={29} aria-label="Point style">
        <svg width="20" height="10" viewBox="0 0 20 10" aria-hidden="true">
          <path d="M3 1V9M0 5.5H6M1 8 5 3" stroke="#222" />
          <path d="M15 4H19L17 6Z" fill="#555" />
        </svg>
      </Cell>
      <Cell type="button" $w={44} aria-label="Line style">
        <svg width="38" height="10" viewBox="0 0 38 10" aria-hidden="true">
          <path d="M0 5H27" stroke="#111" strokeWidth="2" />
          <path d="M33 4H37L35 6Z" fill="#555" />
        </svg>
      </Cell>
      <Cell type="button" $w={51} aria-label="Line width">
        <svg width="44" height="10" viewBox="0 0 44 10" aria-hidden="true">
          <path d="M0 5H33" stroke="#111" strokeWidth="2" />
          <path d="M39 4H43L41 6Z" fill="#555" />
        </svg>
      </Cell>
      <Cell type="button" $w={43}>Groups</Cell>
      <Cell type="button" $w={14}>?</Cell>
    </Status>
  );
}

function App() {
  return (
    <>
      <GlobalStyle />
      <Window>
        <Menu>
          {menus.map((menu) => (
            <button type="button" key={menu}>{menu}</button>
          ))}
        </Menu>
        <Row>
          <Toolbar bars={viewBars} />
        </Row>
        <Row>
          <Toolbar bars={createBars} />
          <Overflow type="button" aria-label="More tools">
            <More />
          </Overflow>
        </Row>
        <Row>
          <Grip />
          <Axis>X</Axis>
          <Combo wide label="X" value="-0.51458" />
          <Axis>Y</Axis>
          <Combo wide label="Y" value="-1.26072" />
          <Axis>Z</Axis>
          <Combo wide label="Z" value="0.0" />
          <PointTools>
            <Tools items={["fastPoint", "pointSettings", "autocursor", "v", "help"]} />
            <Grip />
          </PointTools>
          <Faded>
            <Tools items={selectTools} />
          </Faded>
        </Row>
        <Workspace>
          <Dock>
            <DockGrip />
            <Tools items={solidsDock} vertical />
            <DockMore type="button" aria-label="More solids"><More down /></DockMore>
            <DockGrip />
            <DockMore type="button" aria-label="More tools"><More down /></DockMore>
          </Dock>
          <Managers>
            <ManagerTab type="button" $tall>Toolpaths</ManagerTab>
            <ManagerTab type="button">Solids</ManagerTab>
          </Managers>
          <Center>
            <Ribbon>
              <PanelButton type="button" aria-label="Arc">
                <Icon name="arcPanel" size={16} />
              </PanelButton>
              <Separator />
              <PanelGroup>
                <PanelButton type="button" aria-label="Edit first point">
                  <Icon name="plusOne" size={16} />
                </PanelButton>
                <Flip type="button" aria-label="Flip">
                  <svg width="54" height="14" viewBox="0 0 54 14" aria-hidden="true">
                    <path d="M0 7 8 1V4.5H28L24 9.5H8V13Z" fill="#9c9cd0" stroke="#5e5e9a" strokeWidth="0.6" />
                    <path d="M54 7 46 1V4.5H30L26 9.5H46V13Z" fill="#ee3a1e" stroke="#a32812" strokeWidth="0.6" />
                    <path d="M21 13 33 1" stroke="#111" strokeWidth="1.6" />
                  </svg>
                </Flip>
                <Measures>
                  <Measure icon="radius" label="Radius" value="1.42761" />
                  <Measure icon="diameter" label="Diameter" value="2.85522" />
                </Measures>
                <Measures>
                  <Measure icon="startAngle" label="Start angle" value="94.25627" />
                  <Measure icon="endAngle" label="End angle" value="272.94602" />
                </Measures>
                <PanelButton type="button" aria-label="Tangent">
                  <Icon name="tangent" size={16} />
                </PanelButton>
                <Confirm>
                  <PanelButton type="button" aria-label="Apply"><Icon name="apply" size={16} /></PanelButton>
                  <PanelButton type="button" aria-label="OK"><Icon name="ok" size={16} /></PanelButton>
                  <PanelButton type="button" aria-label="Help"><Icon name="question" size={16} /></PanelButton>
                </Confirm>
              </PanelGroup>
            </Ribbon>
            <Canvas>
              <Drawing />
              <Axes corner="topLeft" origin="C" />
              <Axes corner="topRight" origin="T" />
              <Axes corner="bottomLeft" />
              <Prompt>Enter the center point</Prompt>
              <ViewName>TOP</ViewName>
              <Scale>
                <span>0.8233 in</span>
                <span>Inch</span>
              </Scale>
            </Canvas>
          </Center>
          <Dock $right>
            <DockGrip />
            <Tools items={quickDock} vertical />
            <DockGrip />
            <FastTools>
              <Tools items={fastDock} vertical />
            </FastTools>
            <Separator $vertical />
            <DockMore type="button" aria-label="More tools" $last><More down /></DockMore>
          </Dock>
        </Workspace>
        <StatusBar />
      </Window>
    </>
  );
}

const GlobalStyle = createGlobalStyle`
  * {
    box-sizing: border-box;
  }

  body {
    margin: 0;
    background: #000;
    color: #222;
    font-family: Roboto, "Open Sans", sans-serif;
    font-size: 9px;
  }

  button {
    padding: 0;
    border: 0;
    background: none;
    color: inherit;
    font: inherit;
  }

  input,
  select {
    min-width: 0;
    padding: 0;
    border: 0;
    outline: 0;
    color: inherit;
    font: inherit;
  }

  svg {
    display: block;
    flex: none;
    overflow: visible;
  }
`;

const Window = styled.div`
  display: flex;
  flex-direction: column;
  min-height: 100vh;
  padding: 24px 0;
  background: #eee;
  background-clip: content-box;
`;

const Menu = styled.nav`
  display: flex;
  gap: 10px;
  height: 18px;
  padding-left: 14px;
  align-items: center;
`;

const Row = styled.div`
  display: flex;
  align-items: center;
  height: 30px;
`;

const Tool = styled.button`
  display: flex;
  flex: none;
  align-items: center;
  justify-content: center;
  width: ${(props) => (props.$vertical ? "28px" : "26px")};
  height: 26px;

  &:nth-child(even) {
    ${(props) => (props.$vertical ? "height: 27px;" : "width: 27px;")}
  }
`;

const Caret = styled.button`
  display: flex;
  flex: none;
  align-items: center;
  justify-content: center;
  width: ${(props) => (props.$vertical ? "28px" : "17px")};
  height: ${(props) => (props.$vertical ? "17px" : "20px")};
`;

const Separator = styled.span`
  flex: none;
  ${(props) =>
    props.$vertical
      ? css`
          width: 27px;
          height: 1px;
          margin: 3px 0;
        `
      : css`
          width: 1px;
          height: 26px;
          margin: 0 3px;
        `}
  background: #bdbdbd;
`;

const Grip = styled.span`
  flex: none;
  width: 2px;
  height: 20px;
  margin: 0 4px 0 3px;
  background: repeating-linear-gradient(#b4b4b4 0 1px, transparent 1px 3px);

  &:first-child {
    margin-right: 2px;
  }
`;

const DockGrip = styled.span`
  flex: none;
  width: 20px;
  height: 2px;
  margin: 5px 4px 3px;
  background: repeating-linear-gradient(90deg, #b4b4b4 0 2px, transparent 2px 4px);
`;

const Overflow = styled.button`
  margin: 0 4px 10px auto;
`;

const PointTools = styled.div`
  display: flex;
  align-items: center;
  margin-left: 4px;
`;

const Faded = styled.div`
  display: flex;
  align-items: center;
  margin-left: 2px;
  opacity: 0.6;
`;

const Axis = styled.span`
  flex: none;
  width: 30px;
  font-family: "Open Sans", sans-serif;
  font-size: 20px;
  font-weight: 500;
  line-height: 28px;
  text-align: center;
  color: #000;
`;

const ComboBox = styled.div`
  display: flex;
  flex: none;
  width: ${(props) => (props.$wide ? "116px" : "59px")};
  height: ${(props) => (props.$wide ? "15px" : "17px")};
  padding: 1px 0 1px 1px;
  border: 1px solid ${(props) => (props.$wide ? "#c4c4c4" : "#e2e2e2")};
  background: #fff;
`;

const ComboInput = styled.input`
  flex: 1;
  background: #f8f583;
  ${(props) =>
    props.$wide
      ? css`
          padding-left: 2px;
        `
      : css`
          font-family: "Liberation Sans", sans-serif;
        `}
`;

const ComboButton = styled.button`
  display: flex;
  align-items: center;
  justify-content: center;
  width: 12px;
`;

const Workspace = styled.div`
  display: flex;
  flex: 1;
`;

const Dock = styled.div`
  display: flex;
  flex-direction: column;
  width: ${(props) => (props.$right ? "34px" : "28px")};
  ${(props) =>
    props.$right &&
    css`
      padding: 2px 0 0 2px;
      border-right: 1px solid #333;
    `}
`;

const FastTools = styled.div`
  opacity: 0.65;
`;

const DockMore = styled.button`
  display: flex;
  align-items: center;
  justify-content: center;
  width: 14px;
  height: 22px;
  margin-left: 14px;
  ${(props) =>
    props.$last &&
    css`
      margin-top: auto;
      margin-left: 12px;
    `}
`;

const Managers = styled.div`
  display: flex;
  flex-direction: column;
  gap: 4px;
  width: 25px;
  padding: 7px 0 0 1px;
`;

const ManagerTab = styled.button`
  height: ${(props) => (props.$tall ? "45px" : "28px")};
  width: 20px;
  border-left: 4px solid #bdbdbd;
  font-family: "Liberation Sans", sans-serif;
  font-size: 10px;
  line-height: 16px;
  writing-mode: vertical-rl;
`;

const Center = styled.div`
  display: flex;
  flex: 1;
  flex-direction: column;
  min-width: 0;
`;

const Ribbon = styled.div`
  display: flex;
  align-items: center;
  height: 32px;
  padding-left: 4px;
  border-bottom: 2px solid #dcdcdc;
`;

const PanelGroup = styled.div`
  display: flex;
  align-items: center;
  gap: 20px;
  margin-left: 16px;
`;

const Measures = styled.div`
  display: flex;
  gap: 10px;
  margin-right: 6px;
`;

const Field = styled.div`
  display: flex;
  align-items: center;

  & > div:nth-child(2) {
    margin-left: 5px;
  }
`;

const PanelButton = styled.button`
  display: flex;
  flex: none;
  align-items: center;
  justify-content: center;
  width: 18px;
  height: 18px;
  border: 1px solid #b5b5b5;
  background: #e8e8e8;
`;

const Confirm = styled.div`
  display: flex;
  gap: 6px;
  margin-left: 4px;
`;

const Flip = styled.button`
  display: flex;
  align-items: center;
  justify-content: center;
  width: 80px;
  height: 16px;
  border: 1px solid #adadad;
  background: #e1e1e1;
`;

const Spinner = styled.span`
  display: flex;
  flex-direction: column;
  width: 13px;
  height: 17px;
  border: 1px solid #777;
  background: #fff;

  & button {
    display: flex;
    flex: 1;
    align-items: center;
    justify-content: center;
  }
`;

const Canvas = styled.main`
  position: relative;
  flex: 1;
  overflow: hidden;
  background: #f8f8f8;
  font-family: "Open Sans", sans-serif;
`;

const Sketch = styled.svg`
  position: absolute;
  inset: 0;
  width: 1193px;
  height: 510px;

  & text {
    font-size: 10px;
    font-weight: 700;
    fill: #17cf17;
  }
`;

const corners = {
  topLeft: "top: 3px; left: 36px;",
  topRight: "top: 3px; right: 3px;",
  bottomLeft: "bottom: 32px; left: 36px;",
};

const Gnomon = styled.svg`
  position: absolute;
  ${(props) => corners[props.$corner]}
  font-family: "DejaVu Sans", sans-serif;
  font-size: 9px;
  font-weight: 700;
`;

const Prompt = styled.div`
  position: absolute;
  top: 71px;
  left: 281px;
  padding: 0 4px;
  border: 1px solid #555;
  background: #fff;
  box-shadow: 2px 2px 1px #999;
  font-family: "Liberation Sans", sans-serif;
  font-size: 13px;
  line-height: 17px;
  white-space: nowrap;
`;

const ViewName = styled.span`
  position: absolute;
  bottom: 6px;
  left: 16px;
  color: #000;
  font-size: 10px;
  font-weight: 700;
`;

const Scale = styled.div`
  position: absolute;
  right: 18px;
  bottom: 8px;
  display: flex;
  flex-direction: column;
  width: 78px;
  border: solid #777;
  border-width: 0 1px;
  color: #000;
  font-family: "DejaVu Sans", sans-serif;
  font-size: 9px;
  font-weight: 700;
  line-height: 10px;
  text-align: center;

  & span:first-child {
    border-bottom: 1px solid #777;
  }
`;

const Status = styled.footer`
  display: flex;
  gap: 2px;
  height: 22px;
  padding: 2px 2px 1px;
  border-bottom: 1px solid #7b4b35;
  background: #595959;
`;

const StatusText = styled.span`
  flex: 1;
  color: #e4e4e4;
  line-height: 18px;
`;

const cell = css`
  display: flex;
  flex: none;
  align-items: center;
  justify-content: center;
  background: #fafafa;
  font-family: "Liberation Sans", sans-serif;
`;

const Cell = styled.button`
  ${cell}
  width: ${(props) => props.$w}px;
  ${(props) => props.$shade && "background: #ececec;"}
`;

const DepthField = styled.div`
  ${cell}
  width: 75px;

  & label {
    width: 10px;
    text-align: center;
  }

  & input {
    flex: 1;
    height: 12px;
    margin: 0 0 3px 2px;
    padding-left: 2px;
    background: #f8f583;
    caret-color: transparent;
  }

  & input::selection {
    background: #3a95e4;
    color: #fff;
  }

  & button {
    width: 16px;
    padding-left: 5px;
  }
`;

const Swatch = styled.button`
  ${cell}
  flex-direction: column;
  justify-content: space-between;
  width: 24px;
  padding: 2px 1px 1px;

  &::after {
    content: "";
    width: 22px;
    height: 5px;
    background: ${(props) => props.$color};
  }
`;

const LevelField = styled.div`
  ${cell}
  gap: 3px;
  width: 104px;
`;

const SelectWrap = styled.span`
  display: flex;
  align-items: center;
  width: 77px;
  height: 16px;
  padding-right: 3px;
  border: 1px solid #c4c4c4;

  & select {
    flex: 1;
    height: 14px;
    padding-left: 3px;
    appearance: none;
    background: transparent;
  }
`;

export default App;
